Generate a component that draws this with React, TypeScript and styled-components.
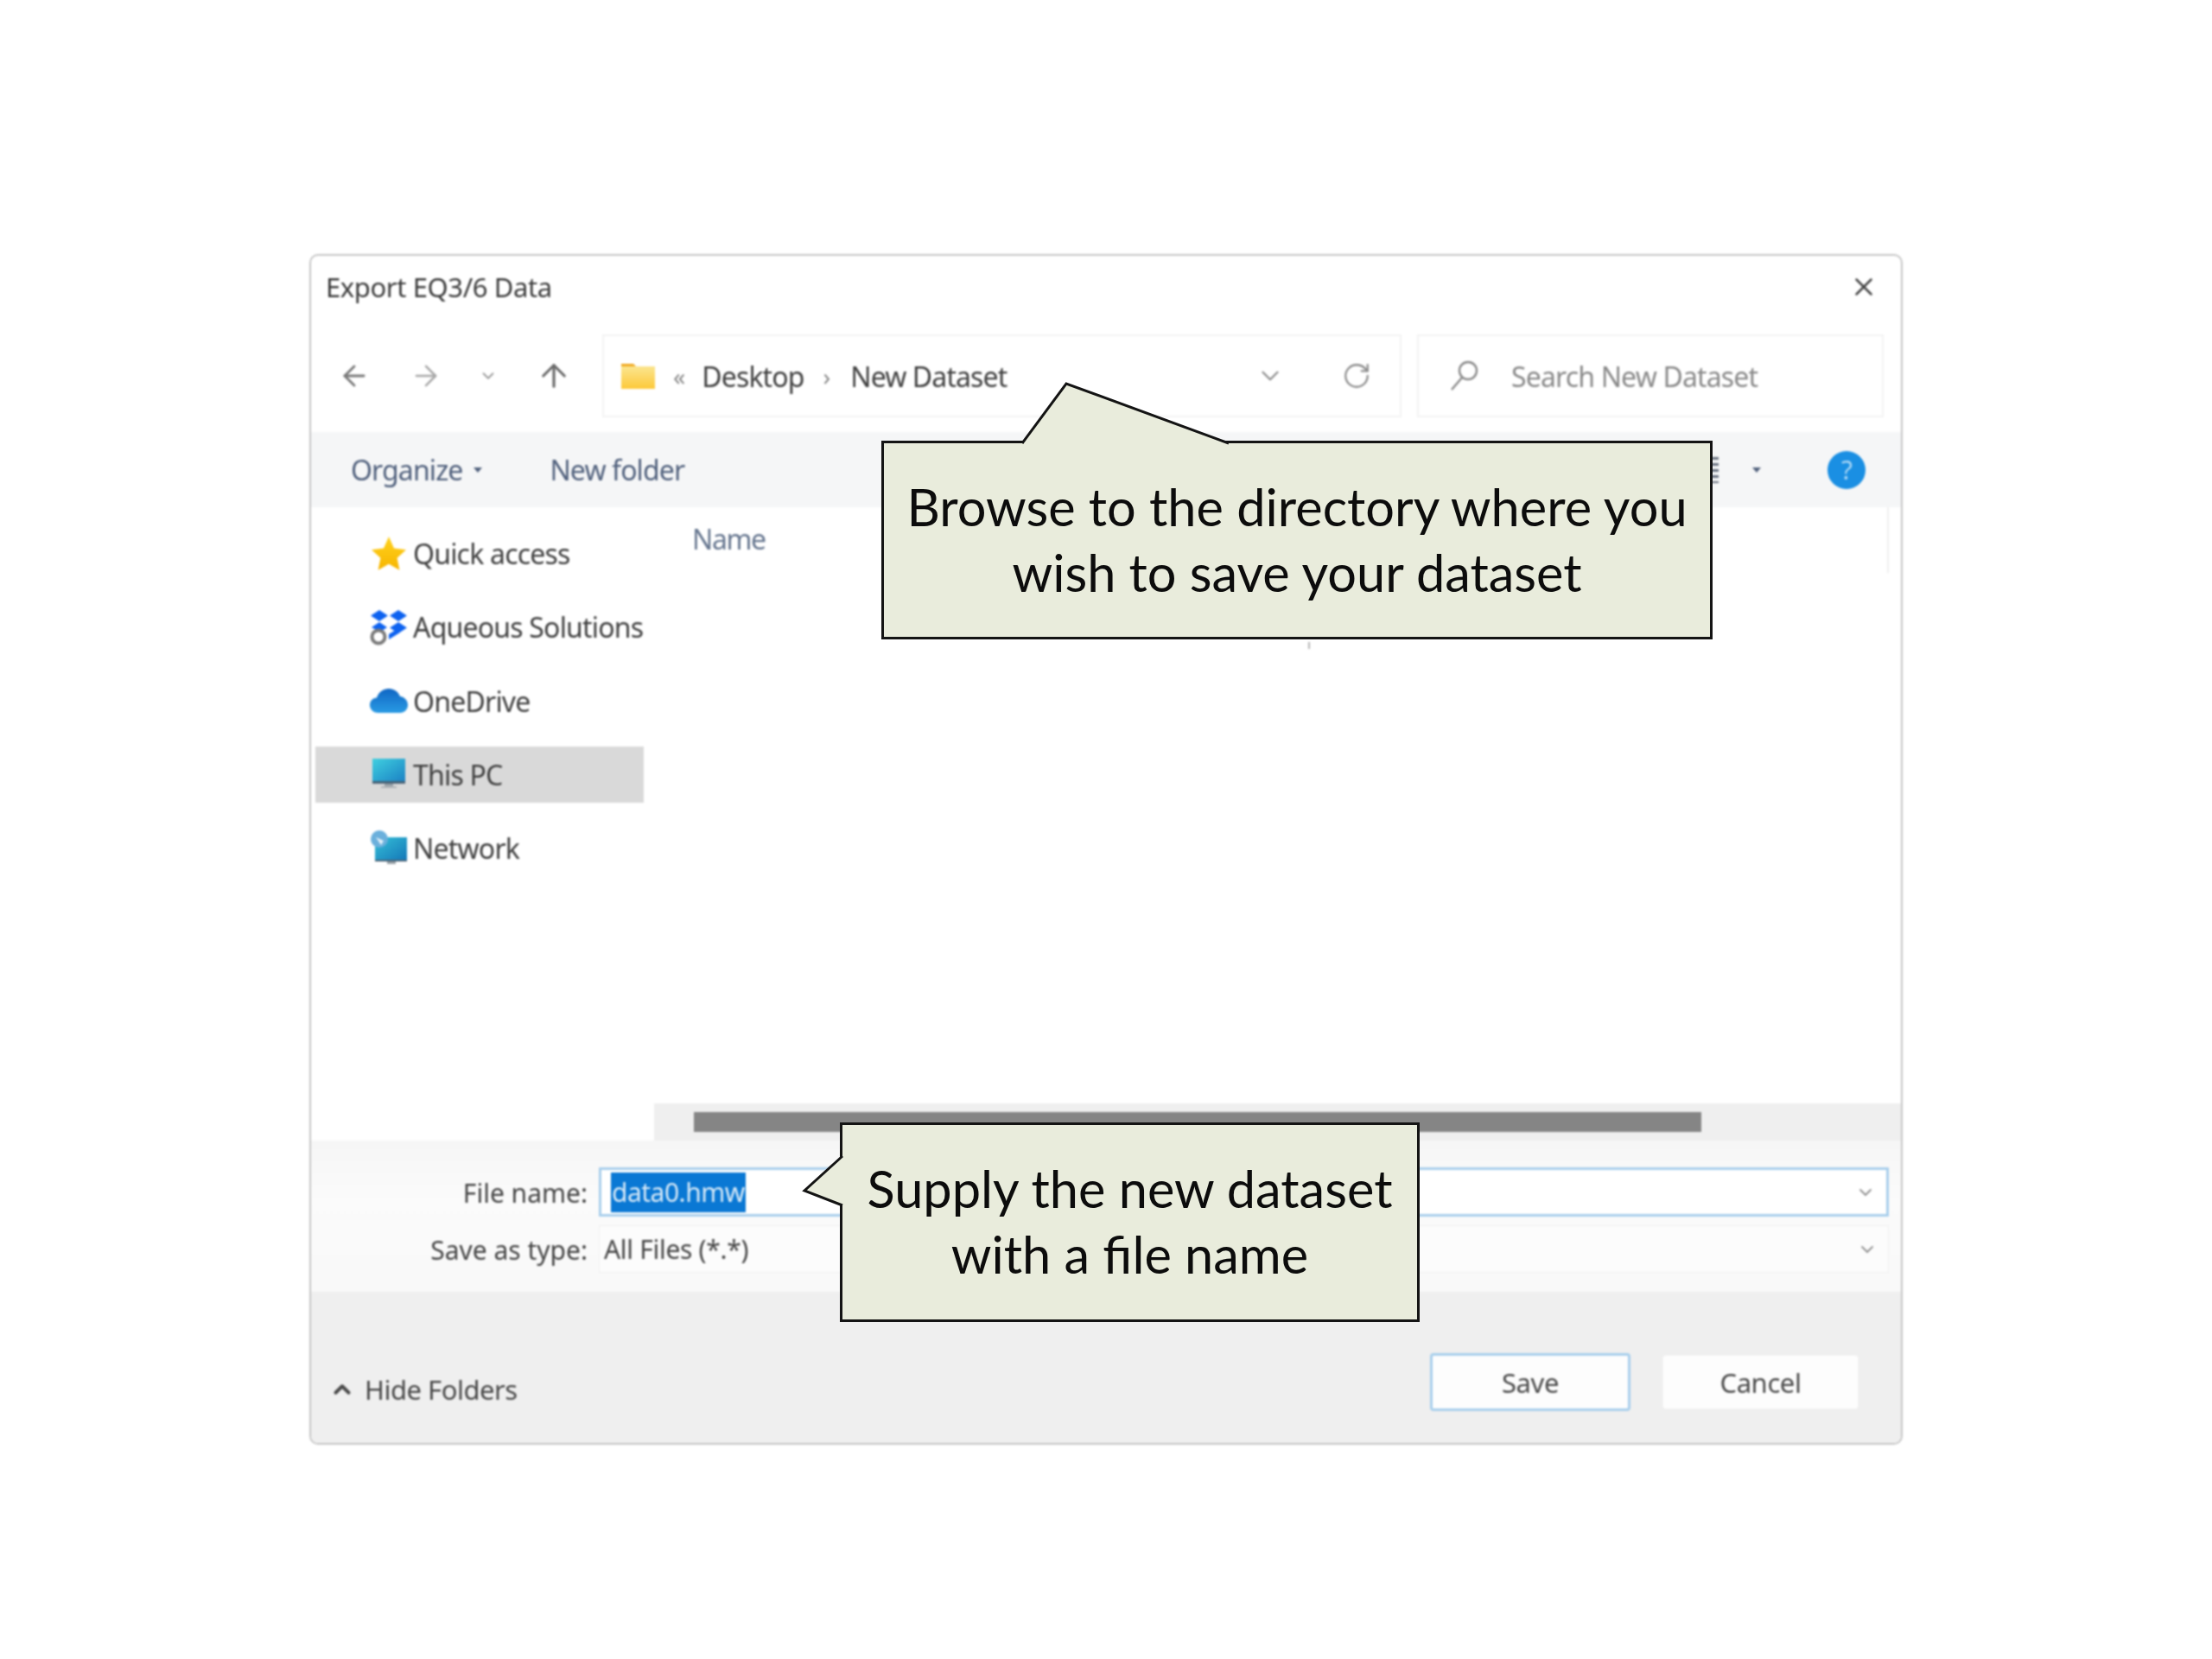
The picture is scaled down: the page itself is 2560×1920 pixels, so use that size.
import { ArrowLeft, ArrowRight, ArrowUp, ChevronDown, ChevronUp, RotateCw, X } from 'lucide-react';
import styled, { createGlobalStyle } from 'styled-components';

const GlobalStyle = createGlobalStyle`
  html, body {
    margin: 0;
    background: #fff;
  }
  * {
    box-sizing: border-box;
  }
`;

const Page = styled.div`
  position: relative;
  width: 2560px;
  height: 1920px;
  padding: 294px 0 0 358px;
  background: #fff;
  font-family: "Noto Sans", "Open Sans", sans-serif;
`;

const Dialog = styled.div`
  width: 1844px;
  height: 1378px;
  display: flex;
  flex-direction: column;
  border: 2px solid #c6c6c6;
  border-radius: 10px;
  overflow: hidden;
  background: #fff;
  filter: blur(0.8px);
`;

const TitleBar = styled.div`
  height: 91px;
  flex: none;
  display: flex;
  align-items: center;
  justify-content: space-between;
  padding: 0 26px 20px 17px;
  font-size: 31px;
  letter-spacing: -0.4px;
  color: #3c3c3c;
`;

const NavBar = styled.div`
  height: 113px;
  flex: none;
  display: flex;
  align-items: flex-start;
  padding-right: 21px;
`;

const NavButtons = styled.div`
  width: 337px;
  height: 96px;
  flex: none;
  display: flex;
  align-items: center;
  padding-left: 31px;
`;

const NavIcon = styled.span<{ $w: number; $color: string }>`
  width: ${(p) => p.$w}px;
  display: flex;
  justify-content: flex-start;
  color: ${(p) => p.$color};
`;

const AddressBox = styled.div`
  width: 925px;
  height: 96px;
  flex: none;
  display: flex;
  align-items: center;
  border: 2px solid #f3f3f3;
  padding-left: 20px;
  font-size: 32px;
  letter-spacing: -0.9px;
  color: #3f3f3f;
`;

const Crumb = styled.span<{ $left: number }>`
  margin-left: ${(p) => p.$left}px;
`;

const CrumbMark = styled.span<{ $left: number }>`
  margin-left: ${(p) => p.$left}px;
  font-size: 28px;
  color: #8a8a8a;
`;

const AddressTools = styled.div`
  margin-left: auto;
  display: flex;
  align-items: center;
  gap: 66px;
  padding-right: 33px;
  color: #8d8d8d;
`;

const SearchBox = styled.div`
  width: 540px;
  height: 96px;
  margin-left: 18px;
  flex: none;
  display: flex;
  align-items: center;
  gap: 36px;
  border: 2px solid #f3f3f3;
  padding-left: 33px;
  font-size: 32px;
  letter-spacing: -0.85px;
  color: #8a8a8a;
`;

const ToolBar = styled.div`
  height: 87px;
  flex: none;
  display: flex;
  align-items: center;
  padding: 0 41px 0 46px;
  background: #f5f6f7;
  font-size: 32px;
  letter-spacing: -0.9px;
  color: #51617d;
`;

const DownCaret = styled.span`
  display: inline-block;
  width: 0;
  height: 0;
  border-left: 5px solid transparent;
  border-right: 5px solid transparent;
  border-top: 6px solid #51617d;
`;

const Organize = styled.div`
  display: flex;
  align-items: center;
  gap: 13px;
`;

const NewFolder = styled.div`
  margin-left: 78px;
`;

const ToolRight = styled.div`
  margin-left: auto;
  display: flex;
  align-items: center;
  gap: 39px;
`;

const ViewLines = styled.span`
  width: 20px;
  height: 30px;
  background: repeating-linear-gradient(#6a7280 0 3px, transparent 3px 7px);
`;

const HelpIcon = styled.span`
  width: 44px;
  height: 44px;
  margin-left: 38px;
  display: flex;
  align-items: center;
  justify-content: center;
  border-radius: 50%;
  background: #1a8fe3;
  color: #a9d6f5;
  font-size: 30px;
  font-weight: 400;
`;

const Main = styled.div`
  height: 733px;
  flex: none;
  display: flex;
`;

const Sidebar = styled.nav`
  width: 397px;
  flex: none;
  display: flex;
  flex-direction: column;
  gap: 20.3px;
  padding: 21px 0 0 5px;
  font-size: 32px;
  letter-spacing: -0.8px;
  color: #404040;
`;

const NavRow = styled.div<{ $selected?: boolean }>`
  width: 380px;
  height: 65px;
  flex: none;
  display: flex;
  align-items: center;
  gap: 6px;
  padding-left: 63px;
  white-space: nowrap;
  background: ${(p) => (p.$selected ? '#d9d9d9' : 'transparent')};
`;

const RowIcon = styled.svg`
  width: 44px;
  height: 44px;
  flex: none;
`;

const ListPane = styled.div`
  flex: 1;
  min-width: 0;
  position: relative;
  display: flex;
  flex-direction: column;
`;

const ListHead = styled.div`
  flex: 1;
  padding: 15px 0 0 44px;
  font-size: 32px;
  letter-spacing: -1.4px;
  color: #66768f;
`;

const SortMark = styled.span`
  position: absolute;
  left: 757px;
  top: 156px;
  width: 2px;
  height: 8px;
  background: #b5b5b5;
`;

const ListEdge = styled.div`
  position: absolute;
  right: 14px;
  top: 0;
  width: 2px;
  height: 76px;
  background: #efefef;
`;

const ScrollTrack = styled.div`
  height: 43px;
  flex: none;
  padding: 10px 0 0 46px;
  background: #efefef;
`;

const ScrollThumb = styled.div`
  width: 1166px;
  height: 23px;
  background: #858585;
`;

const FormArea = styled.div`
  height: 175px;
  flex: none;
  display: grid;
  grid-template-columns: 320px 1fr;
  grid-auto-rows: min-content;
  column-gap: 13px;
  row-gap: 10px;
  padding: 31px 14px 0 0;
  background: linear-gradient(#f6f6f6, #fbfbfb 40%, #f9f9f9);
  font-size: 30px;
  letter-spacing: 0;
  color: #454545;
`;

const FieldLabel = styled.div`
  display: flex;
  align-items: center;
  justify-content: flex-end;
  padding-top: 2px;
`;

const Field = styled.div<{ $focused?: boolean }>`
  height: ${(p) => (p.$focused ? 57 : 55)}px;
  display: flex;
  align-items: center;
  justify-content: space-between;
  padding: 0 12px 0 ${(p) => (p.$focused ? 11 : 5)}px;
  background: ${(p) => (p.$focused ? '#fff' : '#fcfcfc')};
  border: ${(p) => (p.$focused ? '3px solid #a9cfec' : '1px solid #f0f0f0')};
  color: #8f8f8f;
`;

const FieldValue = styled.span`
  color: #454545;
  letter-spacing: -0.3px;
`;

const Selection = styled.span`
  display: flex;
  align-items: center;
  height: 46px;
  padding: 0 1px;
  background: #0a78d4;
  color: #d6e9f8;
  letter-spacing: -0.5px;
`;

const Footer = styled.div`
  flex: 1;
  display: flex;
  align-items: flex-start;
  justify-content: space-between;
  padding: 71px 49px 0 21px;
  background: #efefef;
`;

const HideFolders = styled.div`
  height: 67px;
  display: flex;
  align-items: center;
  gap: 11px;
  padding-top: 17px;
  font-size: 31px;
  letter-spacing: -0.5px;
  color: #4a4a4a;
`;

const Actions = styled.div`
  display: flex;
  align-items: center;
  gap: 37px;
`;

const ActionButton = styled.button<{ $primary?: boolean }>`
  width: ${(p) => (p.$primary ? 232 : 227)}px;
  height: ${(p) => (p.$primary ? 67 : 63)}px;
  padding: 1px 0 0;
  background: #fdfdfd;
  border: ${(p) => (p.$primary ? '3px solid #a9cfec' : '1px solid #f4f4f4')};
  border-radius: 4px;
  font-family: inherit;
  font-size: 31px;
  letter-spacing: -0.4px;
  color: #4a4a4a;
`;

const Callout = styled.div<{ $left: number; $top: number; $width: number; $height: number }>`
  position: absolute;
  left: ${(p) => p.$left}px;
  top: ${(p) => p.$top}px;
  width: ${(p) => p.$width}px;
  height: ${(p) => p.$height}px;
  display: flex;
  align-items: center;
  justify-content: center;
  padding-bottom: 3px;
  border: 3px solid #141414;
  background: #e9ecdc;
  font-family: Lato, "Open Sans", sans-serif;
  font-size: 59.5px;
  line-height: 76px;
  text-align: center;
  color: #0c0c0c;
`;

const Pointer = styled.svg<{ $left: number; $top: number }>`
  position: absolute;
  left: ${(p) => p.$left}px;
  top: ${(p) => p.$top}px;
  overflow: visible;
`;

const SearchGlyph = () => (
  <svg width="38" height="38" viewBox="0 0 38 38" fill="none" stroke="#8a8a8a" strokeWidth="2.400">
    <circle cx="24" cy="13" r="10" />
    <path d="M17 21L5 35" />
  </svg>
);

const SideIconStar = () => (
  <RowIcon viewBox="0 0 44 44">
    <defs>
      <linearGradient id="starFill" x1="0" y1="0" x2="0" y2="1">
        <stop offset="0" stopColor="#ffd21e" />
        <stop offset="1" stopColor="#f7b500" />
      </linearGradient>
    </defs>
    <path d="M22 2l6 13.500 14 1.700-10.400 9.500 2.800 14L22 33.700 9.600 40.700l2.800-14L2 17.200l14-1.700z" fill="url(#starFill)" />
  </RowIcon>
);

const SideIconDropbox = () => (
  <RowIcon viewBox="0 0 44 44">
    <path d="M11 2l10 6.500-10 6.500-10-6.500zM33 2l10 6.500-10 6.500-10-6.500z" fill="#0d62f0" />
    <path d="M33 16l10 6.500-10 6.500-10-6.500zM22 30l8-5 5 3-13 8z" fill="#0d62f0" />
    <path d="M11 16l9 6-6 4-3 1-9-5z" fill="#0d62f0" />
    <circle cx="10" cy="33" r="7.500" fill="#fff" stroke="#7a7a7a" strokeWidth="4" />
  </RowIcon>
);

const SideIconCloud = () => (
  <RowIcon viewBox="0 0 44 44">
    <defs>
      <linearGradient id="cloudFill" x1="0" y1="0" x2="0" y2="1">
        <stop offset="0" stopColor="#0f66c4" />
        <stop offset="1" stopColor="#2a9be4" />
      </linearGradient>
    </defs>
    <path d="M10 36C3 36 0 31 0 27c0-5 4-8.500 8-8.500C10 12 16 8 22 8c6 0 11 3.500 13 9 5 .5 9 4.500 9 10 0 5-4 9-9 9z" fill="url(#cloudFill)" />
  </RowIcon>
);

const SideIconMonitor = () => (
  <RowIcon viewBox="0 0 44 44">
    <defs>
      <linearGradient id="screenFill" x1="0" y1="0" x2="1" y2="1">
        <stop offset="0" stopColor="#3fd0e0" />
        <stop offset="1" stopColor="#1b82c4" />
      </linearGradient>
    </defs>
    <rect x="3" y="4" width="38" height="26" fill="url(#screenFill)" />
    <rect x="3" y="30" width="38" height="3" fill="#4a6478" />
    <rect x="17" y="33" width="10" height="3" fill="#9aa2a8" />
    <rect x="13" y="36" width="18" height="2" fill="#b0b4b8" />
  </RowIcon>
);

const SideIconNetwork = () => (
  <RowIcon viewBox="0 0 44 44">
    <defs>
      <linearGradient id="netFill" x1="0" y1="0" x2="1" y2="1">
        <stop offset="0" stopColor="#35c0d8" />
        <stop offset="1" stopColor="#1578b8" />
      </linearGradient>
    </defs>
    <rect x="6" y="9" width="37" height="26" fill="url(#netFill)" />
    <rect x="6" y="35" width="37" height="2" fill="#4a6478" />
    <rect x="20" y="37" width="10" height="3" fill="#9aa2a8" />
    <circle cx="11" cy="11" r="10" fill="#6bb0dc" />
    <path d="M7 9l9 4-3 5z" fill="#e4f1fa" />
  </RowIcon>
);

export default function App() {
  return (
    <Page>
      <GlobalStyle />
      <Dialog>
        <TitleBar>
          Export EQ3/6 Data
          <X size={34} strokeWidth={1.8} color="#444" />
        </TitleBar>

        <NavBar>
          <NavButtons>
            <NavIcon $w={83} $color="#7a7a7a"><ArrowLeft size={38} strokeWidth={1.8} /></NavIcon>
            <NavIcon $w={80} $color="#a8a8a8"><ArrowRight size={38} strokeWidth={1.6} /></NavIcon>
            <NavIcon $w={66} $color="#9a9a9a"><ChevronDown size={22} strokeWidth={2} /></NavIcon>
            <NavIcon $w={50} $color="#6a6a6a"><ArrowUp size={42} strokeWidth={1.8} /></NavIcon>
          </NavButtons>
          <AddressBox>
            <svg width="40" height="32" viewBox="0 0 40 32">
              <defs>
                <linearGradient id="folderFill" x1="0" y1="0" x2="0" y2="1">
                  <stop offset="0" stopColor="#fbe58f" />
                  <stop offset="1" stopColor="#fdc93a" />
                </linearGradient>
              </defs>
              <path d="M0 2h14l4 4h-18z" fill="#f0a81e" />
              <rect x="0" y="5" width="39" height="26" fill="url(#folderFill)" />
            </svg>
            <CrumbMark $left={20}>«</CrumbMark>
            <Crumb $left={20}>Desktop</Crumb>
            <CrumbMark $left={22}>›</CrumbMark>
            <Crumb $left={24}>New Dataset</Crumb>
            <AddressTools>
              <ChevronDown size={34} strokeWidth={1.6} />
              <RotateCw size={34} strokeWidth={1.6} />
            </AddressTools>
          </AddressBox>
          <SearchBox>
            <SearchGlyph />
            Search New Dataset
          </SearchBox>
        </NavBar>

        <ToolBar>
          <Organize>Organize <DownCaret /></Organize>
          <NewFolder>New folder</NewFolder>
          <ToolRight>
            <ViewLines />
            <DownCaret />
            <HelpIcon>?</HelpIcon>
          </ToolRight>
        </ToolBar>

        <Main>
          <Sidebar>
            <NavRow><SideIconStar />Quick access</NavRow>
            <NavRow><SideIconDropbox />Aqueous Solutions</NavRow>
            <NavRow><SideIconCloud />OneDrive</NavRow>
            <NavRow $selected><SideIconMonitor />This PC</NavRow>
            <NavRow><SideIconNetwork />Network</NavRow>
          </Sidebar>
          <ListPane>
            <ListHead>Name</ListHead>
            <SortMark />
            <ListEdge />
            <ScrollTrack><ScrollThumb /></ScrollTrack>
          </ListPane>
        </Main>

        <FormArea>
          <FieldLabel>File name:</FieldLabel>
          <Field $focused>
            <Selection>data0.hmw</Selection>
            <ChevronDown size={24} strokeWidth={1.8} />
          </Field>
          <FieldLabel>Save as type:</FieldLabel>
          <Field>
            <FieldValue>All Files (*.*)</FieldValue>
            <ChevronDown size={24} strokeWidth={1.8} />
          </Field>
        </FormArea>

        <Footer>
          <HideFolders>
            <ChevronUp size={30} strokeWidth={3.2} />
            Hide Folders
          </HideFolders>
          <Actions>
            <ActionButton $primary>Save</ActionButton>
            <ActionButton>Cancel</ActionButton>
          </Actions>
        </Footer>
      </Dialog>

      <Callout $left={1020} $top={510} $width={962} $height={230}>
        <Pointer $left={160} $top={-72} width={240} height={76} viewBox="0 0 240 76">
          <polygon points="0,72 51,3 239,72" fill="#e9ecdc" />
          <rect x="2" y="70" width="235" height="6" fill="#e9ecdc" />
          <polyline points="0,72 51,3 239,72" fill="none" stroke="#141414" strokeWidth="3" />
        </Pointer>
        <span>Browse to the directory where you<br />wish to save your dataset</span>
      </Callout>

      <Callout $left={972} $top={1299} $width={671} $height={231}>
        <Pointer $left={-47} $top={36} width={50} height={60} viewBox="0 0 50 60">
          <polygon points="47,0 3,40 47,57" fill="#e9ecdc" />
          <rect x="44" y="2" width="6" height="53" fill="#e9ecdc" />
          <polyline points="47,0 3,40 47,57" fill="none" stroke="#141414" strokeWidth="3" />
        </Pointer>
        <span>Supply the new dataset<br />with a file name</span>
      </Callout>
    </Page>
  );
}
